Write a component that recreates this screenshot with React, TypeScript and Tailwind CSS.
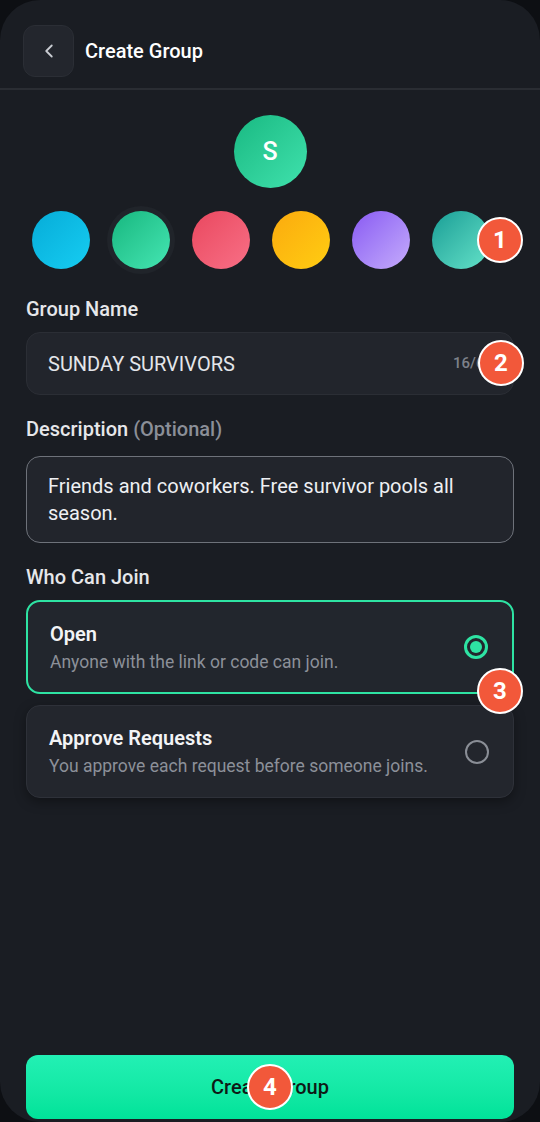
import { ChevronLeft } from "lucide-react";

const swatches = [
  "bg-gradient-to-br from-[#06acd8] to-[#16cdf2]",
  "bg-gradient-to-br from-[#14b77f] to-[#44e6b3]",
  "bg-gradient-to-br from-[#e9475f] to-[#f86f86]",
  "bg-gradient-to-br from-[#fbaa0e] to-[#ffcd12]",
  "bg-gradient-to-br from-[#8a58f2] to-[#c6abfb]",
  "bg-gradient-to-br from-[#139e96] to-[#63e3c9]",
];

function Badge({ n, className }: { n: number; className: string }) {
  return (
    <div
      className={`absolute w-[46px] h-[46px] rounded-full bg-[#f2583a] border-2 border-white flex items-center justify-center text-white text-[24px] font-bold leading-none ${className}`}
    >
      {n}
    </div>
  );
}

function Option({
  title,
  sub,
  selected,
}: {
  title: string;
  sub: string;
  selected?: boolean;
}) {
  return (
    <div
      className={`relative rounded-[14px] flex items-center justify-between pl-[22px] pr-[24px] ${
        selected
          ? "border-2 border-[#2ee3a3] bg-[#22262d] h-[94px]"
          : "border border-[#2e3139] bg-[#23262d] h-[93px] shadow-[0_4px_12px_rgba(0,0,0,0.35)]"
      }`}
    >
      <div className="flex flex-col">
        <span className="text-[20px] font-semibold text-[#f3f4f6] leading-[26px]">{title}</span>
        <span className="text-[17.5px] text-[#8c9099] leading-[24px] mt-[3px]">{sub}</span>
      </div>
      {selected ? (
        <div className="w-[24px] h-[24px] rounded-full border-[3px] border-[#2ee3a3] flex items-center justify-center">
          <div className="w-[12px] h-[12px] rounded-full bg-[#2ee3a3]" />
        </div>
      ) : (
        <div className="w-[24px] h-[24px] rounded-full border-2 border-[#8a8e96]" />
      )}
    </div>
  );
}

export default function App() {
  return (
    <div
      className="w-[540px] h-[1122px] bg-[#0d0f13] overflow-hidden"
      style={{ fontFamily: "Roboto, 'Liberation Sans', sans-serif" }}
    >
      <div className="relative w-full h-full rounded-[40px] bg-[#1a1d23] flex flex-col overflow-hidden">
        {/* header */}
        <div className="h-[90px] border-b-2 border-[#2a2d33] flex items-start pt-[25px] px-[23px] gap-[11px]">
          <button className="w-[51px] h-[52px] rounded-[12px] bg-[#23262d] border border-[#2b2e35] flex items-center justify-center text-[#c9ccd2]">
            <ChevronLeft className="w-[22px] h-[22px]" strokeWidth={2} />
          </button>
          <h1 className="h-[52px] flex items-center text-[20px] font-medium text-white">Create Group</h1>
        </div>

        {/* avatar */}
        <div className="flex justify-center mt-[25px]">
          <div className="w-[73px] h-[73px] rounded-full bg-gradient-to-br from-[#17b982] to-[#3fe2ad] flex items-center justify-center text-white text-[25px] font-medium">
            S
          </div>
        </div>

        {/* swatches */}
        <div className="relative flex gap-[22px] pl-[32px] mt-[23px]">
          {swatches.map((c, i) => (
            <div
              key={i}
              className={`w-[58px] h-[58px] rounded-full shrink-0 ${c} ${
                i === 1 ? "ring-[5px] ring-[#20242a]" : ""
              }`}
            />
          ))}
          <Badge n={1} className="left-[477px] top-[6px]" />
        </div>

        {/* form */}
        <div className="px-[26px] flex flex-col">
          <label className="mt-[28px] text-[20px] font-medium text-[#e6e7ea] leading-[24px]">Group Name</label>
          <div className="relative mt-[11px] h-[63px] rounded-[14px] bg-[#22252c] border border-[#2b2e35] flex items-center justify-between pl-[21px] pr-[20px]">
            <span className="text-[20px] text-[#e4e6ea]">SUNDAY SURVIVORS</span>
            <span className="text-[15px] font-medium text-[#7d818a]">16/60</span>
            <Badge n={2} className="left-[451px] top-[7px]" />
          </div>

          <label className="mt-[22px] text-[20px] font-medium text-[#e6e7ea] leading-[24px]">
            Description <span className="text-[#8b8f98]">(Optional)</span>
          </label>
          <div className="mt-[15px] h-[87px] rounded-[14px] bg-[#22252c] border border-[#6e727a] pl-[21px] pr-[20px] pt-[16px]">
            <p className="text-[20px] text-[#eef0f3] leading-[27px]">
              Friends and coworkers. Free survivor pools all season.
            </p>
          </div>

          <label className="mt-[22px] text-[20px] font-medium text-[#e6e7ea] leading-[24px]">Who Can Join</label>
          <div className="relative mt-[11px] flex flex-col gap-[11px]">
            <Option title="Open" sub="Anyone with the link or code can join." selected />
            <Option title="Approve Requests" sub="You approve each request before someone joins." />
            <Badge n={3} className="left-[451px] top-[68px]" />
          </div>
        </div>

        <div className="flex-1" />

        {/* button */}
        <div className="relative px-[26px] pb-[3px]">
          <button className="w-full h-[64px] rounded-[12px] bg-gradient-to-b from-[#22f0b4] to-[#00e399] text-[#0e1a16] text-[20px] font-medium flex items-center justify-center">
            Create Group
          </button>
          <Badge n={4} className="left-[247px] top-[9px]" />
        </div>
      </div>
    </div>
  );
}
